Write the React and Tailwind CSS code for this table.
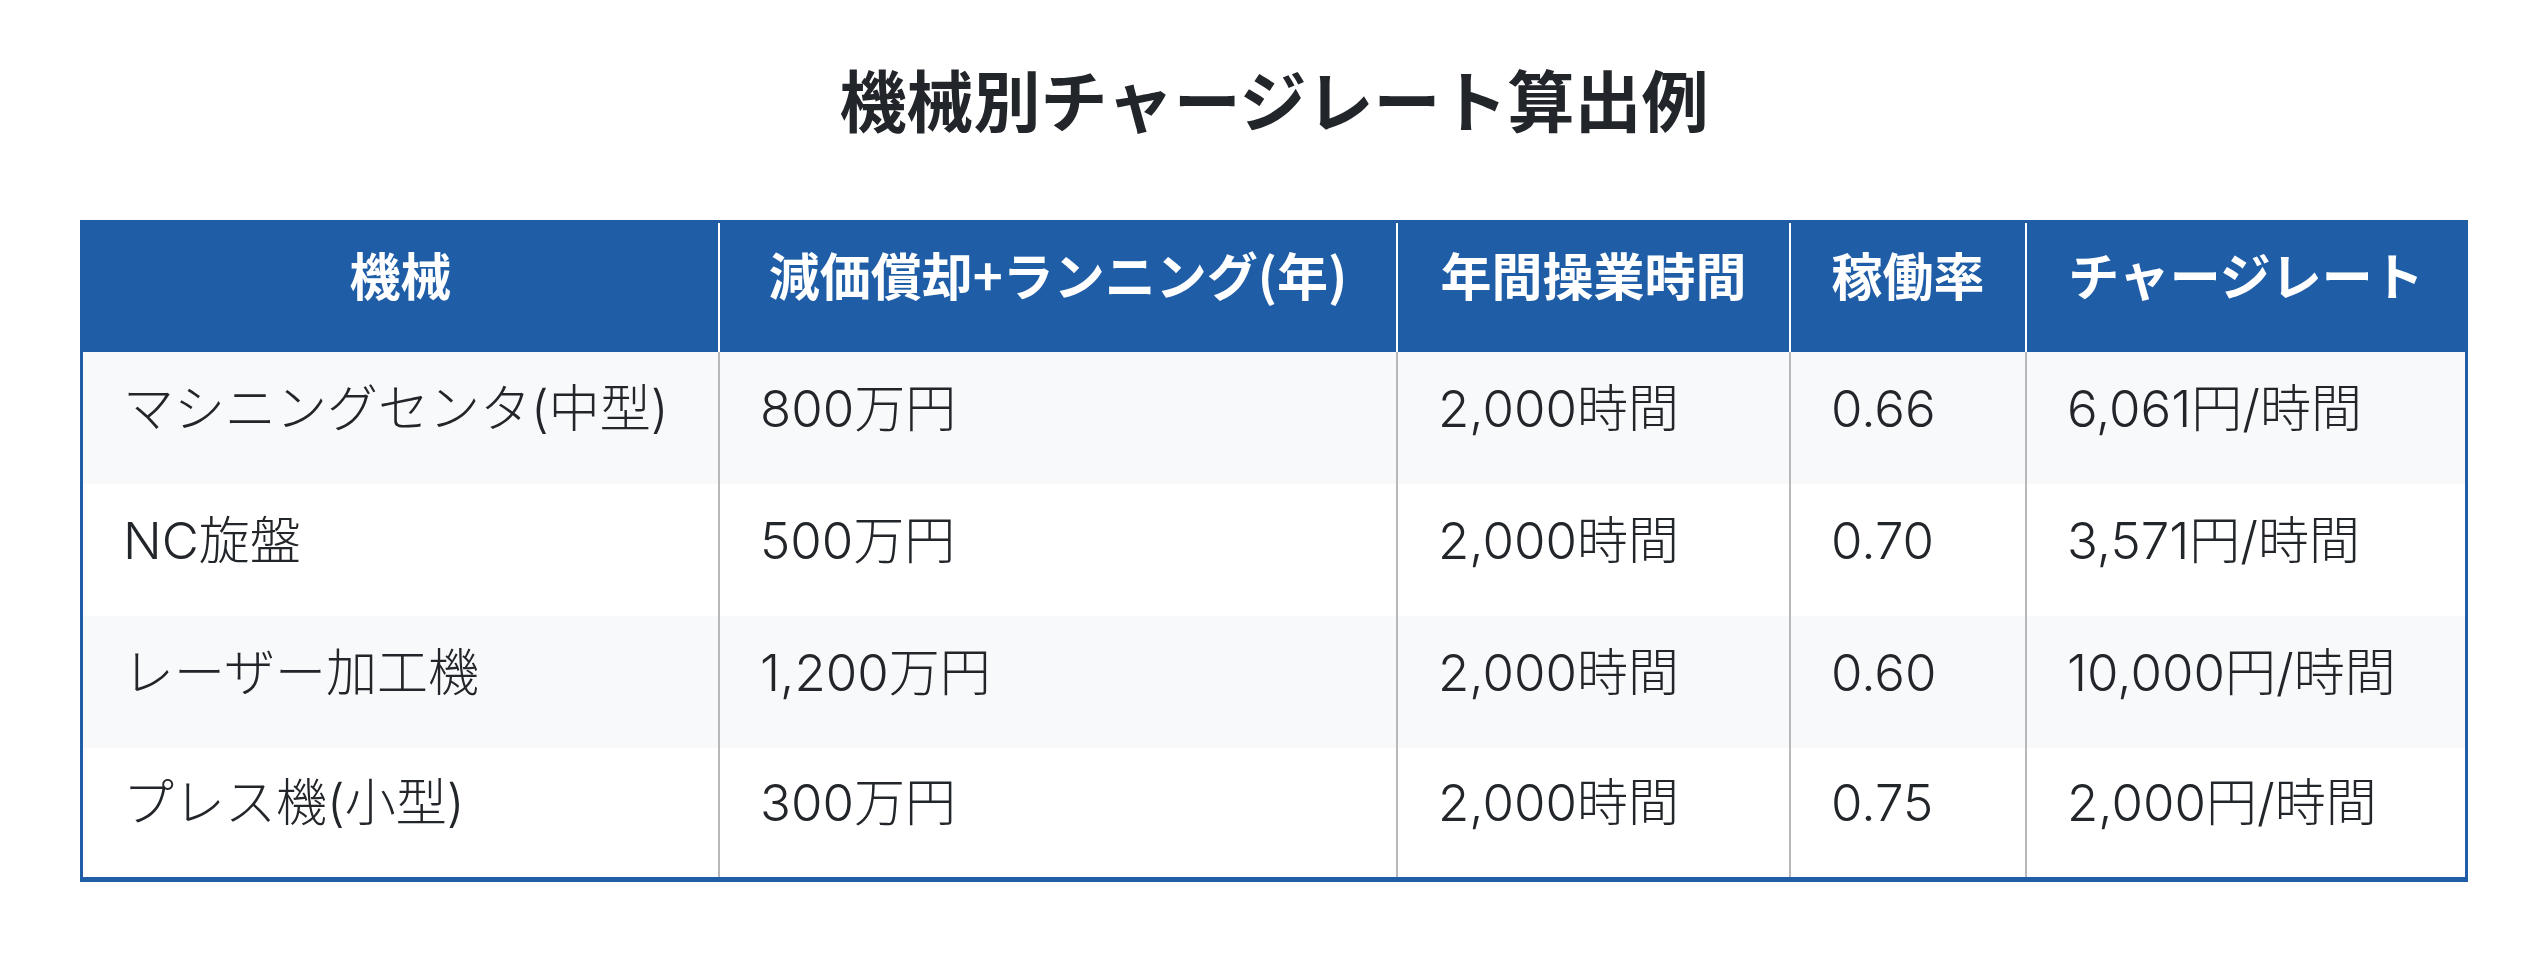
import React from "react";

const rows = [
  ["マシニングセンタ(中型)", "800万円", "2,000時間", "0.66", "6,061円/時間"],
  ["NC旋盤", "500万円", "2,000時間", "0.70", "3,571円/時間"],
  ["レーザー加工機", "1,200万円", "2,000時間", "0.60", "10,000円/時間"],
  ["プレス機(小型)", "300万円", "2,000時間", "0.75", "2,000円/時間"],
];

const headers = ["機械", "減価償却+ランニング(年)", "年間操業時間", "稼働率", "チャージレート"];

export default function App() {
  return (
    <div
      className="w-[2548px] min-h-[960px] bg-white text-[#222529]"
      style={{ fontFamily: '"Noto Sans CJK JP", "Noto Sans", sans-serif' }}
    >
      <h1 className="pt-[64px] text-center text-[67px] font-bold leading-none">
        機械別チャージレート算出例
      </h1>
      <div className="mx-[80px] mt-[89px] border-[3px] border-[#1f5ea7]">
        <div className="grid grid-cols-[635px_678px_393px_236px_440px] bg-[#1f5ea7]">
          {headers.map((h, i) => (
            <div
              key={h}
              className={
                "flex h-[129px] items-center justify-center whitespace-nowrap pb-[27px] text-[51px] font-bold leading-none text-white " +
                (i > 0 ? "border-l-2 border-white" : "")
              }
            >
              {h}
            </div>
          ))}
        </div>
        {rows.map((r, ri) => (
          <div
            key={ri}
            className={
              "grid grid-cols-[635px_678px_393px_236px_440px] " +
              (ri % 2 === 0 ? "bg-[#f8f9fa] " : "bg-white ") +
              (ri === rows.length - 1 ? "h-[131px] border-b-2 border-[#1f5ea7]" : "h-[132px]")
            }
          >
            {r.map((c, ci) => (
              <div
                key={ci}
                className={
                  "flex h-full items-center whitespace-nowrap pb-[20px] pl-[40px] text-[51px] font-light leading-none font-[Inter,'Noto_Sans_CJK_JP',sans-serif] " +
                  (ci > 0 ? "border-l-2 border-[#b8b8b8]" : "")
                }
              >
                {c}
              </div>
            ))}
          </div>
        ))}
      </div>
    </div>
  );
}
